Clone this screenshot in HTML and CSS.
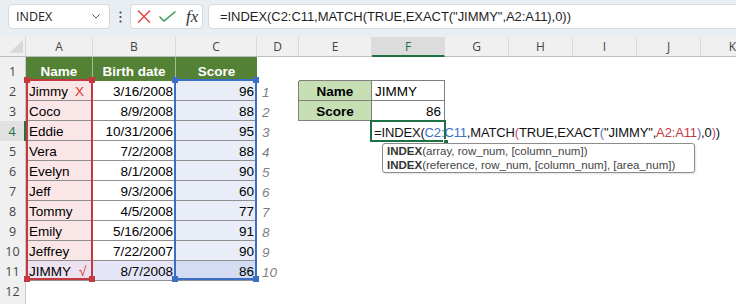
FILE: index.html
```html
<!DOCTYPE html>
<html>
<head>
  <meta charset="utf-8" />
  <title>INDEX / MATCH / EXACT</title>
  <link rel="stylesheet" href="styles.css">
</head>
<body>
  <div id="toolbar">
    <div class="namebox">
      <span>INDEX</span>
      <svg width="8" height="5" viewBox="0 0 8 5"><path d="M0.5 0.5 L4 4 L7.5 0.5" fill="none" stroke="#555" stroke-width="1"/></svg>
    </div>
    <div class="dots">
      <svg width="3" height="12" viewBox="0 0 3 12"><circle cx="1.5" cy="1.5" r="1.1" fill="#444"/><circle cx="1.5" cy="6" r="1.1" fill="#444"/><circle cx="1.5" cy="10.5" r="1.1" fill="#444"/></svg>
    </div>
    <div class="fbtns">
      <svg width="14" height="13" viewBox="0 0 14 13"><path d="M1 0.5 L13 12.5 M13 0.5 L1 12.5" stroke="#e5433f" stroke-width="1.4" fill="none"/></svg>
      <svg width="17" height="11" viewBox="0 0 17 11"><path d="M0.5 5.5 L5 10 L16.5 0.5" stroke="#2f9a55" stroke-width="1.4" fill="none"/></svg>
      <span class="fx">fx</span>
    </div>
    <div class="fbar">=INDEX(C2:C11,MATCH(TRUE,EXACT("JIMMY",A2:A11),0))</div>
  </div>

  <div id="sheet">
    <div class="hrow">
      <div class="corner"><svg width="14" height="13" viewBox="0 0 14 13"><path d="M14 0 L14 13 L0 13 Z" fill="#d9d9d9"/></svg></div>
      <div class="ch">A</div>
      <div class="ch">B</div>
      <div class="ch">C</div>
      <div class="ch">D</div>
      <div class="ch">E</div>
      <div class="ch active">F</div>
      <div class="ch">G</div>
      <div class="ch">H</div>
      <div class="ch">I</div>
      <div class="ch">J</div>
      <div class="ch">K</div>
    </div>

    <div class="row r1">
      <div class="rh">1</div>
      <div class="c hd">Name</div>
      <div class="c hd">Birth date</div>
      <div class="c hd last">Score</div>
      <div class="c"></div>
      <div class="c btop"></div>
      <div class="c btop"></div>
    </div>

    <div class="row">
      <div class="rh">2</div>
      <div class="c t fa">Jimmy<span class="mark">X</span></div>
      <div class="c t num">3/16/2008</div>
      <div class="c t num fc">96</div>
      <div class="c idx bleft">1</div>
      <div class="c lbl">Name</div>
      <div class="c val">JIMMY</div>
    </div>

    <div class="row">
      <div class="rh">3</div>
      <div class="c t fa">Coco</div>
      <div class="c t num">8/9/2008</div>
      <div class="c t num fc">88</div>
      <div class="c idx bleft">2</div>
      <div class="c lbl">Score</div>
      <div class="c val num">86</div>
    </div>

    <div class="row">
      <div class="rh cur">4</div>
      <div class="c t fa">Eddie</div>
      <div class="c t num">10/31/2006</div>
      <div class="c t num fc">95</div>
      <div class="c idx">3</div>
      <div class="c"></div>
      <div class="c edit"><span class="fml">=INDEX(<span class="rb">C2:C11</span>,MATCH<span class="p2">(</span>TRUE,EXACT<span class="p3">(</span>"JIMMY",<span class="rr">A2:A11</span><span class="p3">)</span>,0<span class="p2">)</span>)</span></div>
    </div>

    <div class="row">
      <div class="rh">5</div>
      <div class="c t fa">Vera</div>
      <div class="c t num">7/2/2008</div>
      <div class="c t num fc">88</div>
      <div class="c idx">4</div>
    </div>

    <div class="row">
      <div class="rh">6</div>
      <div class="c t fa">Evelyn</div>
      <div class="c t num">8/1/2008</div>
      <div class="c t num fc">90</div>
      <div class="c idx">5</div>
    </div>

    <div class="row">
      <div class="rh">7</div>
      <div class="c t fa">Jeff</div>
      <div class="c t num">9/3/2006</div>
      <div class="c t num fc">60</div>
      <div class="c idx">6</div>
    </div>

    <div class="row">
      <div class="rh">8</div>
      <div class="c t fa">Tommy</div>
      <div class="c t num">4/5/2008</div>
      <div class="c t num fc">77</div>
      <div class="c idx">7</div>
    </div>

    <div class="row">
      <div class="rh">9</div>
      <div class="c t fa">Emily</div>
      <div class="c t num">5/16/2006</div>
      <div class="c t num fc">91</div>
      <div class="c idx">8</div>
    </div>

    <div class="row">
      <div class="rh">10</div>
      <div class="c t fa">Jeffrey</div>
      <div class="c t num">7/22/2007</div>
      <div class="c t num fc">90</div>
      <div class="c idx">9</div>
    </div>

    <div class="row">
      <div class="rh">11</div>
      <div class="c t fa hit-a">JIMMY<span class="mark ok">√</span></div>
      <div class="c t num hit-b">8/7/2008</div>
      <div class="c t num hit-c">86</div>
      <div class="c idx">10</div>
    </div>

    <div class="row">
      <div class="rh">12</div>
    </div>

    <div class="row tail">
      <div class="rh"></div>
    </div>

    <!-- formula reference outlines -->
    <div class="ref ref-a">
      <i class="hdl tl"></i><i class="hdl tr"></i><i class="hdl bl"></i><i class="hdl br"></i>
    </div>
    <div class="ref ref-c">
      <i class="hdl tl"></i><i class="hdl tr"></i><i class="hdl bl"></i><i class="hdl br"></i>
    </div>

    <div class="cursor"><i class="fill"></i></div>

    <div class="tip">
      <div><b>INDEX</b>(array, row_num, [column_num])</div>
      <div><b>INDEX</b>(reference, row_num, [column_num], [area_num])</div>
    </div>
  </div>
</body>
</html>
```

FILE: styles.css
```css
* {
  box-sizing: border-box;
}
body {
  margin: 0;
  width: 736px;
  height: 304px;
  overflow: hidden;
  background: #fff;
  font-family: 'Liberation Sans', Arial, sans-serif;
  color: #000;
}

/* formula bar */
#toolbar {
  height: 37px;
  background: #e9eef2;
  display: flex;
  align-items: flex-start;
  padding-top: 4px;
}
.namebox {
  margin-left: 8px;
  width: 102px;
  height: 25px;
  background: #fff;
  border: 1px solid #d6d9dc;
  border-radius: 4px;
  display: flex;
  align-items: center;
  justify-content: space-between;
  padding: 0 9px 0 7px;
  font-family: 'Open Sans', sans-serif;
  font-size: 12.5px;
  color: #222;
}
.dots {
  width: 20px;
  height: 25px;
  display: flex;
  align-items: center;
  justify-content: center;
}
.fbtns {
  width: 73px;
  height: 25px;
  background: #fff;
  border: 1px solid #d6d9dc;
  border-radius: 4px;
  display: flex;
  align-items: center;
  padding-left: 6px;
  gap: 8px;
}
.fx {
  font-family: 'Liberation Serif', 'Times New Roman', serif;
  font-style: italic;
  font-size: 17px;
  color: #333;
  margin-left: 2px;
  line-height: 1;
}
.fbar {
  flex: 1;
  margin-left: 5px;
  margin-right: -10px;
  height: 25px;
  background: #fff;
  border: 1px solid #d6d9dc;
  border-radius: 4px;
  display: flex;
  align-items: center;
  padding-left: 11px;
  font-size: 13px;
  letter-spacing: -0.05px;
  color: #1f1f1f;
  white-space: nowrap;
}

/* grid */
#sheet {
  position: relative;
}
.hrow,
.row {
  display: grid;
  grid-template-columns: 26px 67px 83px 81px 42px 73px 73px 64px 64px 64px 64px 64px;
}
.hrow {
  height: 20px;
  background: #f0f0f0;
  border-bottom: 1px solid #bdbdbd;
}
.corner {
  border-right: 1px solid #d4d4d4;
  display: flex;
  align-items: flex-end;
  justify-content: flex-end;
  padding: 0 2px 3px 0;
}
.ch {
  border-right: 1px solid #d9d9d9;
  display: flex;
  align-items: center;
  justify-content: center;
  font-family: 'Open Sans', sans-serif;
  font-size: 12px;
  color: #444;
}
.ch.active {
  background: #dcdcdc;
  color: #1e7145;
  border-bottom: 2px solid #1e7145;
  margin-bottom: -1px;
}
.row {
  height: 20px;
}
.row.r1 {
  height: 24px;
}
.row.tail {
  height: 7px;
}
.rh {
  background: #f0f0f0;
  border-right: 1px solid #c8c8c8;
  display: flex;
  align-items: flex-end;
  justify-content: center;
  font-family: 'Open Sans', sans-serif;
  font-size: 12.5px;
  line-height: 16px;
  color: #444;
  padding-bottom: 1px;
}
.rh.cur {
  background: #e1e1e1;
  color: #1e7145;
  border-right: 2px solid #1e7145;
}

.c {
  display: flex;
  align-items: flex-end;
  padding: 0 3px;
  font-size: 13.5px;
  line-height: 16px;
  white-space: nowrap;
}
.num {
  justify-content: flex-end;
}
.t {
  border-bottom: 1px solid #8f8f8f;
}
.hd {
  background: #538135;
  color: #fff;
  font-weight: bold;
  justify-content: center;
  border-right: 1px solid #a7bb97;
  padding-bottom: 1px;
}
.hd.last {
  border-right: none;
}
.fa {
  background: #fae6e6;
}
.fc {
  background: #e8edf8;
}
.hit-a {
  background: #ebe1ef;
}
.hit-b {
  background: #e4e5f6;
}
.hit-c {
  background: #d3dcf2;
}
.mark {
  color: #e03131;
  margin-left: 7px;
}
.mark.ok {
  margin-left: 8px;
}
.idx {
  font-style: italic;
  color: #7f7f7f;
  padding-left: 5px;
}

/* lookup box E2:F3 */
.btop {
  border-bottom: 1px solid #7f7f7f;
}
.bleft {
  border-right: 1px solid #7f7f7f;
}
.lbl {
  background: #c6e0b4;
  font-weight: bold;
  justify-content: center;
  border-right: 1px solid #7f7f7f;
  border-bottom: 1px solid #7f7f7f;
}
.val {
  border-right: 1px solid #7f7f7f;
  border-bottom: 1px solid #7f7f7f;
}

/* in-cell edit */
.edit {
  overflow: visible;
  padding-left: 2px;
}
.fml {
  font-size: 13px;
  letter-spacing: -0.15px;
  color: #111;
}
.rb {
  color: #3c6fc4;
}
.rr {
  color: #c4393f;
}
.p2 {
  color: #c2457a;
}
.p3 {
  color: #6f6fb8;
}

/* overlays */
.ref {
  position: absolute;
  top: 42px;
  width: 67px;
  height: 201px;
  border: 2px solid;
}
.ref-a {
  left: 26px;
  border-color: #c4393f;
  color: #c4393f;
}
.ref-c {
  left: 174px;
  width: 83px;
  border-color: #3c6fc4;
  color: #3c6fc4;
}
.hdl {
  position: absolute;
  width: 6px;
  height: 6px;
  background: currentColor;
}
.hdl.tl { left: -4px; top: -4px; }
.hdl.tr { right: -4px; top: -4px; }
.hdl.bl { left: -4px; bottom: -4px; }
.hdl.br { right: -4px; bottom: -4px; }

.cursor {
  position: absolute;
  left: 370px;
  top: 83px;
  width: 76px;
  height: 22px;
  border: 2px solid #1e7145;
}
.cursor .fill {
  position: absolute;
  right: -5px;
  bottom: -5px;
  width: 6px;
  height: 6px;
  background: #1e7145;
  border: 1px solid #fff;
}

.tip {
  position: absolute;
  left: 382px;
  top: 106px;
  width: 313px;
  height: 30px;
  background: #fff;
  border: 1px solid #8c8c8c;
  border-radius: 3px;
  box-shadow: 1px 1px 2px rgba(0, 0, 0, 0.12);
  padding: 1px 4px;
  font-size: 11.5px;
  line-height: 13.5px;
  color: #444;
  white-space: nowrap;
}
.tip b {
  color: #333;
}
```
